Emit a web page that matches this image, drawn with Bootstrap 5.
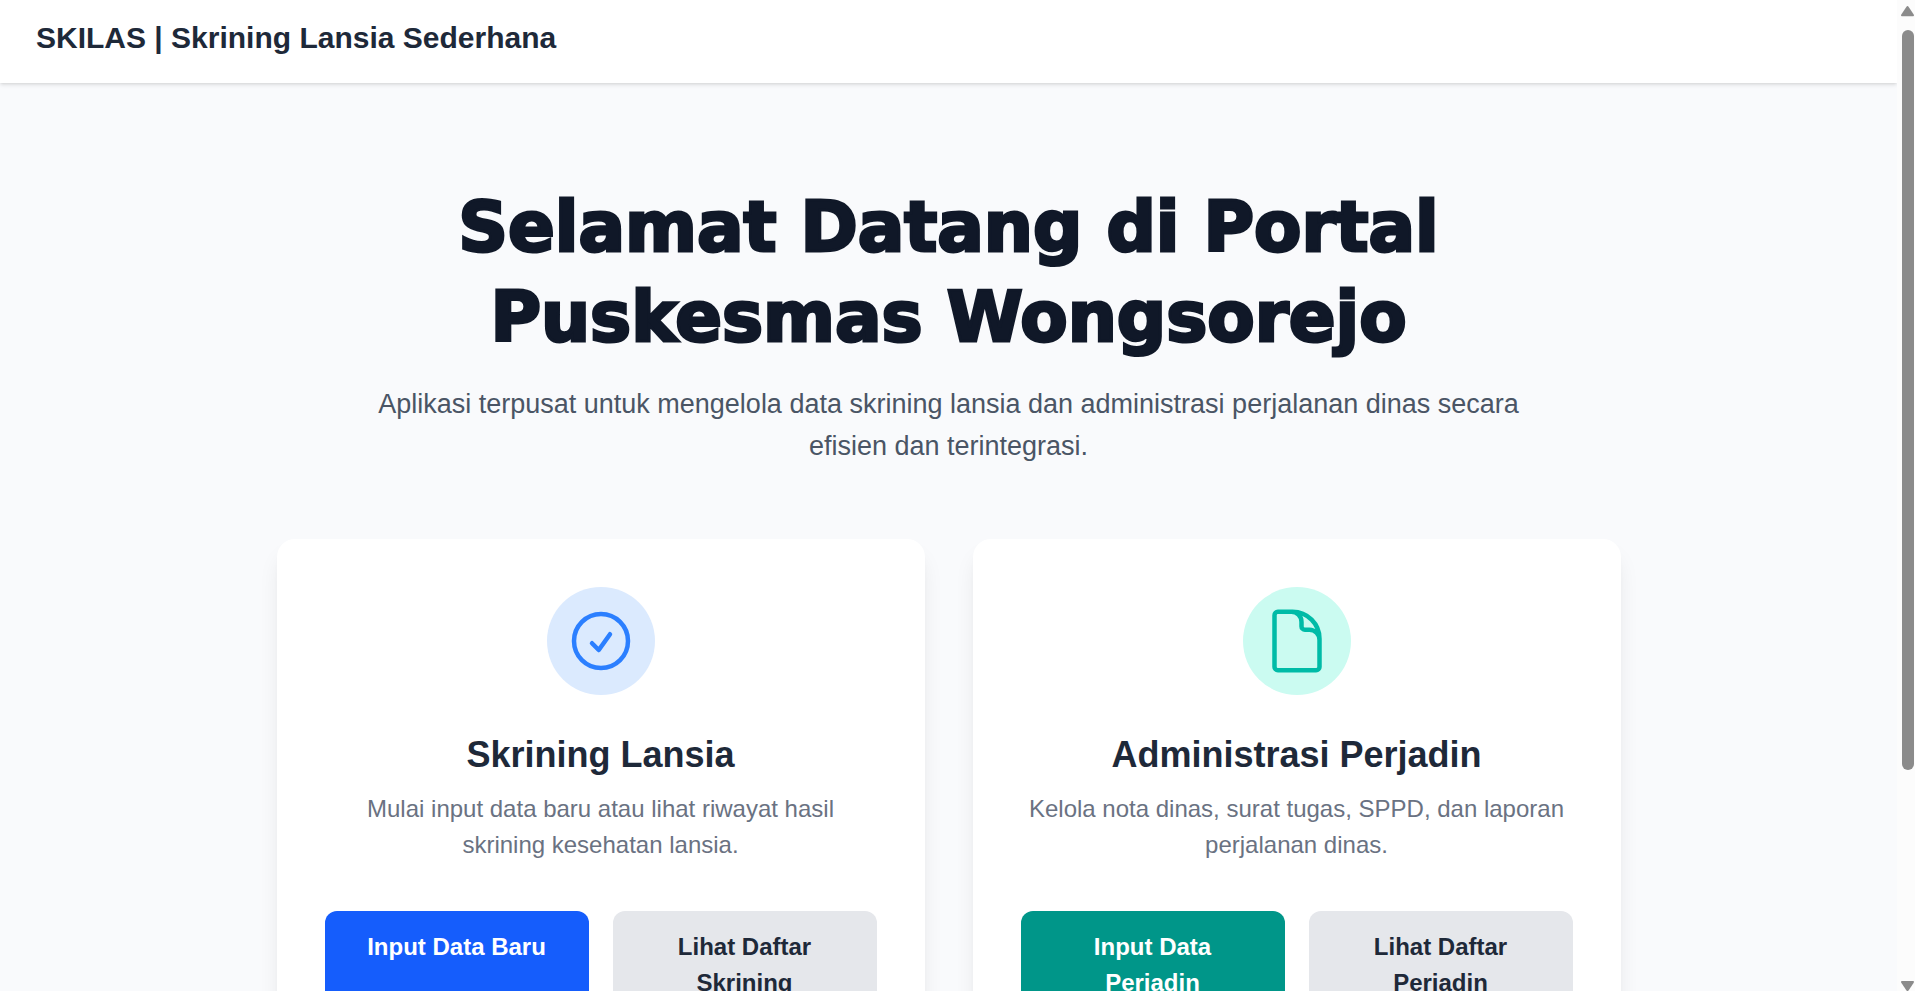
<!DOCTYPE html>
<html lang="id">
<head>
<meta charset="utf-8">
<meta name="viewport" content="width=device-width, initial-scale=1">
<title>SKILAS | Skrining Lansia Sederhana</title>
<link href="https://cdn.jsdelivr.net/npm/bootstrap@5.3.0/dist/css/bootstrap.min.css" rel="stylesheet">
<style>
  body { font-family: "Liberation Sans", Arial, sans-serif; font-size: 24px; line-height: 36px; color: #1e2939; background: #f9fafc; }
  .site-header { padding: 17px 36px 24px; box-shadow: 0 2px 4px rgba(0,0,0,.1), 0 1px 3px -1px rgba(0,0,0,.1); }
  .site-title { font-size: 30px; line-height: 42px; color: #1e2939; }
  .portal { max-width: 1344px; padding-top: 99px; }
  .intro { max-width: 1152px; margin-bottom: 72px; }
  .intro-title { font-family: "DejaVu Sans", "Arial Black", sans-serif; font-weight: 900; font-size: 69px; line-height: 90px; color: #101828; -webkit-text-stroke: 3px #101828; margin-bottom: 21px; }
  .intro-text { font-size: 27px; line-height: 42px; color: #4a5565; }
  .tiles { display: grid; grid-template-columns: 1fr 1fr; gap: 48px; }
  .tile { border: 0; border-radius: 18px; padding: 48px; box-shadow: 0 15px 23px -5px rgba(0,0,0,.1), 0 6px 9px -6px rgba(0,0,0,.1); }
  .tile-icon { padding: 18px; margin-bottom: 36px; }
  .tile-icon svg { width: 72px; height: 72px; display: block; }
  .tile-icon.blue { background: #dbeafe; color: #2b7fff; }
  .tile-icon.teal { background: #cbfbf1; color: #00bba7; }
  .tile-title { font-size: 36px; line-height: 48px; margin-bottom: 12px; }
  .tile-text { color: #6a7282; margin-bottom: 48px; }
  .actions { display: grid; grid-template-columns: 1fr 1fr; gap: 24px; }
  .actions .btn { font-size: 24px; line-height: 36px; font-weight: 700; padding: 18px 36px; border: 0; border-radius: 12px; display: block; }
  .btn-blue, .btn-blue:hover { background: #155dfc; color: #fff; }
  .btn-teal, .btn-teal:hover { background: #009689; color: #fff; }
  .btn-gray, .btn-gray:hover { background: #e5e7eb; color: #1e2939; }
  .scroller { flex: 0 0 18px; background: #fcfcfc; padding: 6px 1px 0 4px; }
  .scroller svg { width: 13px; height: 11px; display: block; fill: #8b8b8b; }
  .track { padding: 13px 0; }
  .thumb { width: 12px; height: 79%; margin-left: 1px; border-radius: 6px; background: #8b8b8b; }
</style>
</head>
<body>
<div class="d-flex vh-100 overflow-hidden">
  <div class="flex-grow-1 overflow-hidden">
    <header class="site-header bg-white position-relative">
      <h1 class="site-title fw-bold m-0">SKILAS | Skrining Lansia Sederhana</h1>
    </header>
    <main class="portal mx-auto">
      <section class="intro mx-auto text-center">
        <h2 class="intro-title">Selamat Datang di Portal Puskesmas Wongsorejo</h2>
        <p class="intro-text m-0">Aplikasi terpusat untuk mengelola data skrining lansia dan administrasi perjalanan dinas secara efisien dan terintegrasi.</p>
      </section>
      <section class="tiles">
        <article class="card tile text-center">
          <div class="tile-icon blue rounded-circle mx-auto">
            <svg viewBox="0 0 24 24" fill="none" stroke="currentColor" stroke-width="1.5" stroke-linecap="round" stroke-linejoin="round" aria-hidden="true"><path d="M9 12.75L11.25 15 15 9.75M21 12a9 9 0 11-18 0 9 9 0 0118 0z"/></svg>
          </div>
          <h3 class="tile-title fw-bold">Skrining Lansia</h3>
          <p class="tile-text">Mulai input data baru atau lihat riwayat hasil skrining kesehatan lansia.</p>
          <div class="actions">
            <a class="btn btn-blue" href="#">Input Data Baru</a>
            <a class="btn btn-gray" href="#">Lihat Daftar Skrining</a>
          </div>
        </article>
        <article class="card tile text-center">
          <div class="tile-icon teal rounded-circle mx-auto">
            <svg viewBox="0 0 24 24" fill="none" stroke="currentColor" stroke-width="1.5" stroke-linecap="round" stroke-linejoin="round" aria-hidden="true"><path d="M19.5 11.625a3.375 3.375 0 00-3.375-3.375h-1.5A1.125 1.125 0 0113.5 7.125v-1.5a3.375 3.375 0 00-3.375-3.375M10.5 2.25H5.625c-.621 0-1.125.504-1.125 1.125v17.25c0 .621.504 1.125 1.125 1.125h12.75c.621 0 1.125-.504 1.125-1.125V11.25a9 9 0 00-9-9z"/></svg>
          </div>
          <h3 class="tile-title fw-bold">Administrasi Perjadin</h3>
          <p class="tile-text">Kelola nota dinas, surat tugas, SPPD, dan laporan perjalanan dinas.</p>
          <div class="actions">
            <a class="btn btn-teal" href="#">Input Data Perjadin</a>
            <a class="btn btn-gray" href="#">Lihat Daftar Perjadin</a>
          </div>
        </article>
      </section>
    </main>
  </div>
  <div class="scroller d-flex flex-column" aria-hidden="true">
    <svg viewBox="0 0 13 11"><path d="M5.3.9a1.5 1.5 0 012.4 0l5 7.6c.6 1 .2 1.8-1 1.8H1.3c-1.2 0-1.6-.8-1-1.8z"/></svg>
    <div class="track flex-grow-1"><div class="thumb"></div></div>
    <svg viewBox="0 0 13 11"><path d="M5.3 10.3a1.5 1.5 0 002.4 0l5-7.6c.6-1 .2-1.8-1-1.8H1.3c-1.2 0-1.6.8-1 1.8z"/></svg>
  </div>
</div>
<script src="https://cdn.jsdelivr.net/npm/bootstrap@5.3.0/dist/js/bootstrap.bundle.min.js"></script>
</body>
</html>
